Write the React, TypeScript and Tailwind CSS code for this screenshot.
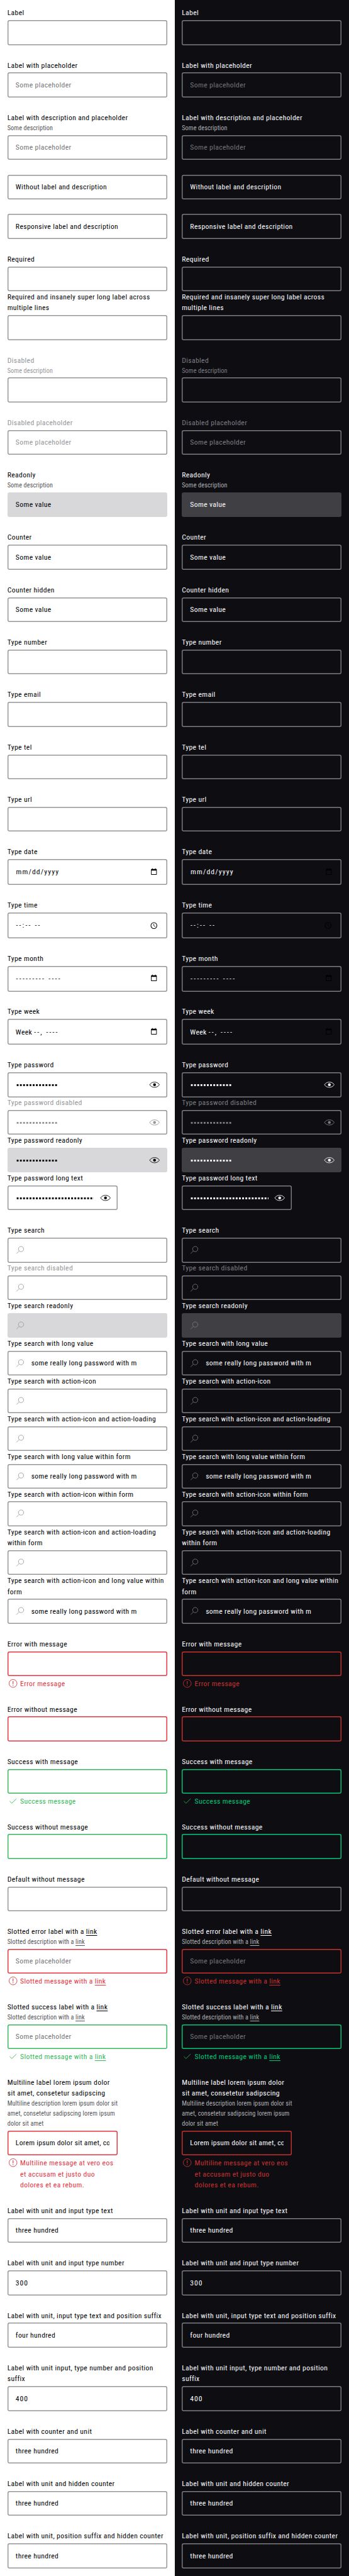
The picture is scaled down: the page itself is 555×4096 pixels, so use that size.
import type { ReactNode } from 'react';

type State = 'none' | 'error' | 'success';
type Kind = 'text' | 'digits' | 'date' | 'time' | 'month' | 'week' | 'password' | 'search';

interface FieldData {
  label?: ReactNode;
  description?: ReactNode;
  message?: ReactNode;
  value?: string;
  placeholder?: string;
  kind?: Kind;
  state?: State;
  disabled?: boolean;
  readonly?: boolean;
  narrow?: boolean;
  dots?: number;
}

interface Theme {
  panel: string;
  label: string;
  description: string;
  placeholder: string;
  disabled: string;
  picker: string;
  searchIcon: string;
  readonly: string;
  border: Record<State, string>;
  message: Record<State, string>;
  messageIcon: Record<State, string>;
}

const light: Theme = {
  panel: 'bg-white',
  label: 'text-[#010205]',
  description: 'text-[#535457]',
  placeholder: 'text-[#757575]',
  disabled: 'text-[#949598]',
  picker: 'text-black',
  searchIcon: 'text-[#949598]',
  readonly: 'bg-[#d8d8db]',
  border: {
    none: 'shadow-[inset_0_0_0_1.46px_#949598]',
    error: 'shadow-[inset_0_0_0_1.46px_#e8323d]',
    success: 'shadow-[inset_0_0_0_1.46px_#36b85c]',
  },
  message: { none: '', error: 'text-[#e8323d]', success: 'text-[#36b85c]' },
  messageIcon: { none: '', error: 'text-[#cc3a40]', success: 'text-[#36b85c]' },
};

const dark: Theme = {
  panel: 'bg-[#0e0e12]',
  label: 'text-[#fbfcff]',
  description: 'text-[#afb0b3]',
  placeholder: 'text-[#757575]',
  disabled: 'text-[#7c7d82]',
  picker: 'text-black',
  searchIcon: 'text-[#7c7d82]',
  readonly: 'bg-[#404044]',
  border: {
    none: 'shadow-[inset_0_0_0_1.46px_#7c7d82]',
    error: 'shadow-[inset_0_0_0_1.46px_#c93030]',
    success: 'shadow-[inset_0_0_0_1.46px_#00c77a]',
  },
  message: { none: '', error: 'text-[#c93030]', success: 'text-[#00c77a]' },
  messageIcon: { none: '', error: 'text-[#c93030]', success: 'text-[#36a858]' },
};

const Link = () => (
  <a className="underline decoration-[1px] underline-offset-[2px]">link</a>
);

const groups: FieldData[][] = [
  [{ label: 'Label' }],
  [{ label: 'Label with placeholder', placeholder: 'Some placeholder' }],
  [{ label: 'Label with description and placeholder', description: 'Some description', placeholder: 'Some placeholder' }],
  [{ value: 'Without label and description' }],
  [{ value: 'Responsive label and description' }],
  [{ label: 'Required' }, { label: 'Required and insanely super long label across\nmultiple lines' }],
  [{ label: 'Disabled', description: 'Some description', disabled: true }],
  [{ label: 'Disabled placeholder', placeholder: 'Some placeholder', disabled: true }],
  [{ label: 'Readonly', description: 'Some description', value: 'Some value', readonly: true }],
  [{ label: 'Counter', value: 'Some value' }],
  [{ label: 'Counter hidden', value: 'Some value' }],
  [{ label: 'Type number' }],
  [{ label: 'Type email' }],
  [{ label: 'Type tel' }],
  [{ label: 'Type url' }],
  [{ label: 'Type date', kind: 'date' }],
  [{ label: 'Type time', kind: 'time' }],
  [{ label: 'Type month', kind: 'month' }],
  [{ label: 'Type week', kind: 'week' }],
  [
    { label: 'Type password', kind: 'password', dots: 13 },
    { label: 'Type password disabled', kind: 'password', dots: 13, disabled: true },
    { label: 'Type password readonly', kind: 'password', dots: 13, readonly: true },
    { label: 'Type password long text', kind: 'password', dots: 25, narrow: true },
  ],
  [
    { label: 'Type search', kind: 'search' },
    { label: 'Type search disabled', kind: 'search', disabled: true },
    { label: 'Type search readonly', kind: 'search', readonly: true },
    { label: 'Type search with long value', kind: 'search', value: 'some really long password with m' },
    { label: 'Type search with action-icon', kind: 'search' },
    { label: 'Type search with action-icon and action-loading', kind: 'search' },
    { label: 'Type search with long value within form', kind: 'search', value: 'some really long password with m' },
    { label: 'Type search with action-icon within form', kind: 'search' },
    { label: 'Type search with action-icon and action-loading\nwithin form', kind: 'search' },
    { label: 'Type search with action-icon and long value within\nform', kind: 'search', value: 'some really long password with m' },
  ],
  [{ label: 'Error with message', state: 'error', message: 'Error message' }],
  [{ label: 'Error without message', state: 'error' }],
  [{ label: 'Success with message', state: 'success', message: 'Success message' }],
  [{ label: 'Success without message', state: 'success' }],
  [{ label: 'Default without message' }],
  [
    {
      label: <>Slotted error label with a <Link /></>,
      description: <>Slotted description with a <Link /></>,
      message: <>Slotted message with a <Link /></>,
      placeholder: 'Some placeholder',
      state: 'error',
    },
  ],
  [
    {
      label: <>Slotted success label with a <Link /></>,
      description: <>Slotted description with a <Link /></>,
      message: <>Slotted message with a <Link /></>,
      placeholder: 'Some placeholder',
      state: 'success',
    },
  ],
  [
    {
      label: 'Multiline label lorem ipsum dolor\nsit amet, consetetur sadipscing',
      description: 'Multiline description lorem ipsum dolor sit\namet, consetetur sadipscing lorem ipsum\ndolor sit amet',
      message: 'Multiline message at vero eos\net accusam et justo duo\ndolores et ea rebum.',
      value: 'Lorem ipsum dolor sit amet, co',
      state: 'error',
      narrow: true,
    },
  ],
  [{ label: 'Label with unit and input type text', value: 'three hundred' }],
  [{ label: 'Label with unit and input type number', value: '300', kind: 'digits' }],
  [{ label: 'Label with unit, input type text and position suffix', value: 'four hundred' }],
  [{ label: 'Label with unit input, type number and position\nsuffix', value: '400', kind: 'digits' }],
  [{ label: 'Label with counter and unit', value: 'three hundred' }],
  [{ label: 'Label with unit and hidden counter', value: 'three hundred' }],
  [{ label: 'Label with unit, position suffix and hidden counter', value: 'three hundred' }],
];

const EyeIcon = () => (
  <svg viewBox="0 0 24 24" className="size-[17.5px] shrink-0" fill="none" stroke="currentColor" strokeWidth="1.2">
    <path d="M1.4 12C3.8 8.2 7.6 6.3 12 6.3S20.2 8.2 22.6 12C20.2 15.8 16.4 17.7 12 17.7S3.8 15.8 1.4 12Z" />
    <circle cx="12" cy="12" r="3.1" fill="currentColor" stroke="none" />
  </svg>
);

const SearchIcon = () => (
  <svg viewBox="0 0 24 24" className="size-[17.5px] shrink-0" fill="none" stroke="currentColor" strokeWidth="1.1">
    <circle cx="13" cy="9.7" r="5.7" />
    <path d="M9 13.7 3 19.7" />
  </svg>
);

const CalendarIcon = () => (
  <svg viewBox="0 0 24 24" className="size-[17.5px] shrink-0">
    <path
      fill="currentColor"
      fillRule="evenodd"
      d="M8 3.8h1.4v1.4h5.2V3.8H16v1.4h.9c.9 0 1.4.6 1.4 1.4v9.8c0 .8-.5 1.4-1.4 1.4H7.1c-.9 0-1.4-.6-1.4-1.4V6.6c0-.8.5-1.4 1.4-1.4H8ZM7 8.5v8h10v-8Z"
    />
  </svg>
);

const ClockIcon = () => (
  <svg viewBox="0 0 24 24" className="size-[17.5px] shrink-0" fill="none" stroke="currentColor" strokeWidth="1.4">
    <circle cx="12" cy="12" r="6.5" />
    <path d="M11.8 8.2V12.3L15 14.2" strokeWidth="1.1" />
  </svg>
);

const ErrorIcon = () => (
  <svg viewBox="0 0 24 24" className="size-[17.5px] shrink-0" fill="none" stroke="currentColor" strokeWidth="1.2">
    <circle cx="12" cy="12" r="8.6" />
    <path d="M12 7v6.4M12 15v1.8" strokeWidth="1.5" />
  </svg>
);

const CheckIcon = () => (
  <svg viewBox="0 0 24 24" className="size-[17.5px] shrink-0" fill="none" stroke="currentColor" strokeWidth="1.2">
    <path d="M4.6 12.2 9.3 16.8 19.4 7" />
  </svg>
);

function Dots({ count }: { count: number }) {
  return (
    <svg viewBox="0 0 170 8" className="h-[5.8px] w-[124.2px] shrink-0" fill="currentColor">
      {Array.from({ length: count }, (_, i) => (
        <rect key={i} x={1.5 + i * 7.03} y="2.7" width="4" height="4" />
      ))}
    </svg>
  );
}

function BoxContent({ field, theme }: { field: FieldData; theme: Theme }) {
  const tone = field.disabled ? theme.disabled : field.placeholder ? theme.placeholder : theme.label;
  switch (field.kind) {
    case 'date':
      return (
        <div className={`flex w-full items-center justify-between pl-[0.7px] ${tone}`}>
          <span className="pt-[1px] tracking-[0.098em]">mm/dd/yyyy</span>
          <span className={`mr-[-1px] ${theme.picker}`}><CalendarIcon /></span>
        </div>
      );
    case 'time':
      return (
        <div className={`flex w-full items-center justify-between pl-[0.7px] ${tone}`}>
          <span className="pt-[1px] tracking-[0.184em]">--:-- --</span>
          <span className={`mr-[-0.5px] ${theme.picker}`}><ClockIcon /></span>
        </div>
      );
    case 'month':
      return (
        <div className={`flex w-full items-center justify-between pl-[0.7px] ${tone}`}>
          <span className="pt-[1px] tracking-[0.196em]">--------- ----</span>
          <span className={`mr-[-1px] ${theme.picker}`}><CalendarIcon /></span>
        </div>
      );
    case 'week':
      return (
        <div className={`flex w-full items-center justify-between ${tone}`}>
          <span className="pt-[1px]">
            Week <span className="tracking-[0.18em]">--, ----</span>
          </span>
          <span className={`mr-[-1px] ${theme.picker}`}><CalendarIcon /></span>
        </div>
      );
    case 'password':
      return (
        <div className={`flex w-full items-center justify-between ${tone}`}>
          <Dots count={field.dots ?? 0} />
          <span className="mr-[-2.2px]"><EyeIcon /></span>
        </div>
      );
    case 'search':
      return (
        <div className={`flex w-full items-center gap-[8.5px] ${tone}`}>
          <span className={`ml-[-1.2px] ${theme.searchIcon}`}><SearchIcon /></span>
          {field.value && <span className="pt-[1px] whitespace-nowrap">{field.value}</span>}
        </div>
      );
    case 'digits':
      return <span className={`pt-[1px] tracking-[0.08em] ${tone}`}>{field.value}</span>;
    default:
      return (
        <div
          className={`w-full overflow-hidden pt-[1px] whitespace-nowrap ${field.narrow ? 'tracking-[0.022em]' : ''} ${tone}`}
        >
          {field.value ?? field.placeholder}
        </div>
      );
  }
}

function Field({ field, theme }: { field: FieldData; theme: Theme }) {
  const state = field.state ?? 'none';
  const isPicker = field.kind === 'date' || field.kind === 'time' || field.kind === 'month' || field.kind === 'week';
  return (
    <div className={`flex flex-col ${field.narrow ? 'w-[175.3px]' : 'w-full'}`}>
      {field.label && (
        <div className={`mb-[-0.6px] pt-[0.6px] whitespace-pre ${field.disabled ? theme.disabled : theme.label}`}>
          {field.label}
        </div>
      )}
      {field.description && (
        <div
          className={`mb-[-0.3px] pt-[0.3px] text-[10.23px] leading-[15.985px] tracking-[0.012em] whitespace-pre ${field.disabled ? theme.disabled : theme.description}`}
        >
          {field.description}
        </div>
      )}
      <div
        className={`flex items-center rounded-[3px] px-[13.15px] ${field.label ? 'mt-[2.92px]' : ''} ${isPicker ? 'h-[40.92px]' : 'h-[39.46px]'} ${field.readonly ? theme.readonly : theme.border[state]}`}
      >
        <BoxContent field={field} theme={theme} />
      </div>
      {field.message && (
        <div className={`mt-[2.92px] flex items-start gap-[2.92px] ${theme.message[state]}`}>
          <span className={theme.messageIcon[state]}>{state === 'error' ? <ErrorIcon /> : <CheckIcon />}</span>
          <div className="mb-[-0.6px] pt-[0.6px] whitespace-pre">{field.message}</div>
        </div>
      )}
    </div>
  );
}

function Panel({ theme }: { theme: Theme }) {
  return (
    <div className={`flex min-h-[4096px] flex-1 flex-col gap-[23.4px] p-[11.69px] ${theme.panel}`}>
      {groups.map((fields, g) => (
        <div key={g} className="flex flex-col">
          {fields.map((field, i) => (
            <Field key={i} field={field} theme={theme} />
          ))}
        </div>
      ))}
    </div>
  );
}

export default function App() {
  return (
    <div className="flex h-[4096px] w-[555px] overflow-hidden font-['Roboto',sans-serif] text-[11.69px] leading-[17.55px] tracking-[0.031em] [font-stretch:75%]">
      <Panel theme={light} />
      <Panel theme={dark} />
    </div>
  );
}
